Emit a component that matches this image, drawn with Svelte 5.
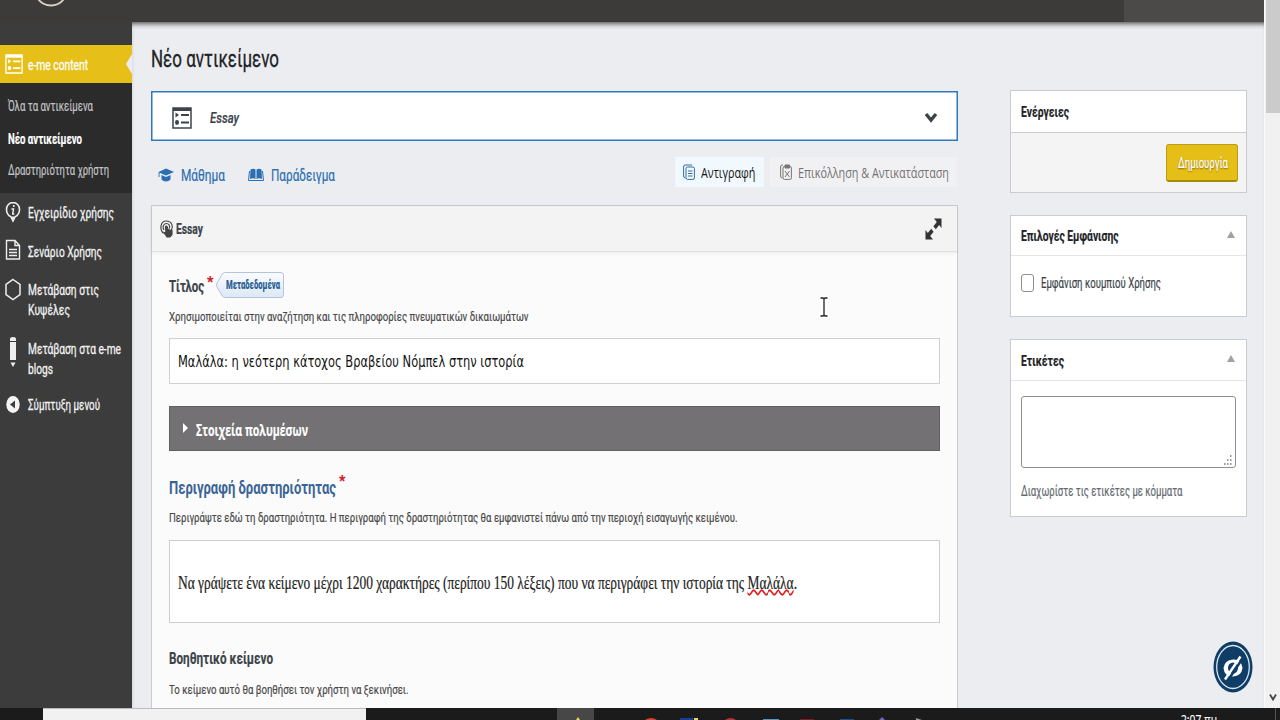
<script>
// sets a label in the condensed width it is given
function condense(node, width) {
    const natural = node.getBoundingClientRect().width;
    node.style.width = `${width}px`;
    node.style.transform = `scaleX(${width / natural})`;
}

const submenu = [
    { label: `Όλα τα αντικείμενα`, width: 85 },
    { label: `Νέο αντικείμενο`, width: 74, current: true },
    { label: `Δραστηριότητα χρήστη`, width: 101 },
];

const menu = [
    { icon: `info`, lines: [[`Εγχειρίδιο χρήσης`, 86]] },
    { icon: `document`, lines: [[`Σενάριο Χρήσης`, 74]] },
    { icon: `hexagon`, lines: [[`Μετάβαση στις`, 71], [`Κυψέλες`, 42]] },
    { icon: `pencil`, lines: [[`Μετάβαση στα e-me`, 93], [`blogs`, 25]] },
    { icon: `collapse`, lines: [[`Σύμπτυξη μενού`, 72]] },
];

let title = `Μαλάλα: η νεότερη κάτοχος Βραβείου Νόμπελ στην ιστορία`;
let showUsage = false;
let tags = ``;
</script>

{#snippet listIcon()}
  <svg class="list-icon" viewBox="0 0 20 22" width="20" height="22">
    <path d="M1 1h18v20H1z" fill="none" stroke="currentColor" stroke-width="1.5" />
    <path d="M1 1h18v3H1z" fill="currentColor" />
    <path d="M3.500 5.500l3.500 2.500-3.500 2.500z" fill="currentColor" />
    <path d="M9 8h8M9 15.500h8" stroke="currentColor" stroke-width="2" />
    <ellipse cx="5" cy="15.500" rx="2" ry="2.400" fill="currentColor" />
  </svg>
{/snippet}

<div class="screen">
  <header class="adminbar">
    <svg class="logo" viewBox="0 0 36 8" width="36" height="8">
      <path d="M3 -4C7 3 12 5.500 18 5.500S29 3 33 -4" fill="none" stroke="#d8d5bd" stroke-width="1.800" />
    </svg>
    <div class="account"></div>
  </header>

  <div class="body">
    <nav class="sidebar">
      <a class="top" href="#content">
        {@render listIcon()}
        <span class="t" use:condense={60}>e-me content</span>
      </a>
      <ul class="submenu">
        {#each submenu as item}
          <li class:current={item.current}><span class="t" use:condense={item.width}>{item.label}</span></li>
        {/each}
      </ul>
      <ul class="menu">
        {#each menu as item}
          <li class={item.icon}>
            <svg viewBox="0 0 16 26" width="16" height="26">
              {#if item.icon === `info`}
                <path d="M8 1.500C4.200 1.500 1.500 4.500 1.500 8.600c0 3.700 2.200 6.200 4.500 7.300L8 20l2-4.100c2.300-1.100 4.500-3.600 4.500-7.300C14.500 4.500 11.800 1.500 8 1.500z" fill="none" stroke="#eee" stroke-width="1.600" />
                <path d="M6.500 15.500h3L8 20.500z" fill="#eee" />
                <path d="M8.800 4v2M6.500 8h2l-.8 5h1.600" fill="none" stroke="#eee" stroke-width="1.500" />
              {:else if item.icon === `document`}
                <path d="M1.500 1.500h8.500l4.500 5v13.500h-13zM10 1.500v5h4.500" fill="none" stroke="#eee" stroke-width="1.400" />
                <path d="M4 10.500h8M4 13.500h8M4 16.500h8" stroke="#eee" stroke-width="1.300" />
              {:else if item.icon === `hexagon`}
                <path d="M8 1.500l7 5v10l-7 5-7-5v-10z" fill="none" stroke="#eee" stroke-width="1.500" />
              {:else if item.icon === `pencil`}
                <path d="M5 3q0-2 3-2t3 2v2H5zM5 6h6v18H5z" fill="#eee" />
                <path d="M5.500 26.500h5L8 31z" fill="#eee" />
              {:else}
                <ellipse cx="8" cy="9.500" rx="6.700" ry="8.500" fill="#f4f4f4" />
                <path d="M10 5.500v8l-5-4z" fill="#3c3c3c" />
              {/if}
            </svg>
            <div>
              {#each item.lines as [text, width]}
                <p><span class="t" use:condense={width}>{text}</span></p>
              {/each}
            </div>
          </li>
        {/each}
      </ul>
    </nav>

    <main>
      <section class="content">
        <h1><span class="t" use:condense={128}>Νέο αντικείμενο</span></h1>

        <div class="selector">
          {@render listIcon()}
          <em><span class="t" use:condense={29}>Essay</span></em>
          <svg class="chevron" viewBox="0 0 14 12" width="14" height="12">
            <path d="M2 2l5 6 5-6" fill="none" stroke="#3e4247" stroke-width="3.400" />
          </svg>
        </div>

        <div class="toolbar">
          <a href="#lesson">
            <svg viewBox="0 0 16 16" width="16" height="16" fill="#2a6fb0">
              <path d="M8 1.500L16 5 8 8.500 1.500 5.800V10H.6V5z" /><path d="M3.500 8v4.500c2.500 2.500 6.500 2.500 9 0V8L8 10z" />
            </svg>
            <span class="t" use:condense={44}>Μάθημα</span>
          </a>
          <a href="#example" class="example">
            <svg viewBox="0 0 16 16" width="16" height="16" fill="#2a6fb0">
              <path d="M2.500 2.500Q5.500 1 7.500 2.500v9.500Q5 10.500 2 12zM8.500 2.500q2.500-1.500 5 0l.5 9.500q-3-1.500-5.500 0z" />
              <path d="M1.500 4L.5 13.500h15L14.500 4" fill="none" stroke="#2a6fb0" />
            </svg>
            <span class="t" use:condense={64}>Παράδειγμα</span>
          </a>
          <button class="copy">
            <svg viewBox="0 0 12 16" width="12" height="16" fill="none" stroke="#2f6f9f">
              <path d="M9 1H2Q.6 1 .6 3v9q0 2 1.500 2" /><rect x="3" y="3" width="8.400" height="12.400" rx="1.500" /><path d="M5 7h4.500M5 9.500h4.500M5 12h4.500" />
            </svg>
            <span class="t" use:condense={54.5}>Αντιγραφή</span>
          </button>
          <button class="paste">
            <svg viewBox="0 0 12 16" width="12" height="16" fill="none" stroke="#777">
              <path d="M3 1H2Q.6 1 .6 3v9q0 2 1.500 2" /><rect x="3" y="2.500" width="8.400" height="12.900" rx="1.500" /><path d="M5 7l4.500 6M9.500 7L5 13" /><path d="M5 1h4.500v3H5z" fill="#777" />
            </svg>
            <span class="t" use:condense={151}>Επικόλληση &amp; Αντικατάσταση</span>
          </button>
        </div>

        <div class="editor">
          <div class="editor-head">
            <svg viewBox="0 0 13 18" width="13" height="18" fill="none" stroke="#444" stroke-width="1.200">
              <path d="M3.500 13.500C-.8 9 .5 1 6.300 1s7.200 6 5.200 9" /><path d="M4 10C2 7 3.500 3.500 6.300 3.500S10 6 9.500 8.500" />
              <path d="M5.500 6.500q1-1 1.500 0l1 3 4 1v4l-2 2.500H7l-3-4.500 2 .5z" fill="#444" />
            </svg>
            <strong><span class="t" use:condense={27}>Essay</span></strong>
            <svg class="expand" viewBox="0 0 17 22" width="17" height="22">
              <path d="M9 .5h7.500V10l-2.300-3-3.400 4.300-2.400-3L11.800 4zM8 21.500H.5V12l2.300 3 3.400-4.300 2.400 3L5.200 18z" fill="#333" />
            </svg>
          </div>

          <div class="fields">
            <div class="label-row">
              <label for="title"><span class="t" use:condense={35}>Τίτλος</span></label>
              <span class="star">*</span>
              <div class="metadata">
                <svg viewBox="0 0 68 26" width="68" height="26">
                  <defs>
                    <linearGradient id="tag" x2="0" y2="1"><stop stop-color="#fafcfe" /><stop offset="1" stop-color="#dce8f5" /></linearGradient>
                  </defs>
                  <path d="M8.500.5H65q2.500 0 2.500 3v19q0 3-2.500 3H8.500Q6 24.500 4.500 21L1 15q-1-2 0-4l3.500-6Q6 1 8.500.5z" fill="url(#tag)" stroke="#b4c4d8" />
                </svg>
                <b><span class="t" use:condense={54}>Μεταδεδομένα</span></b>
              </div>
            </div>
            <p class="hint"><span class="t" use:condense={359.5}>Χρησιμοποιείται στην αναζήτηση και τις πληροφορίες πνευματικών δικαιωμάτων</span></p>
            <div class="text-input" id="title"><span class="t" use:condense={346}>{title}</span></div>
            <div class="media">
              <svg viewBox="0 0 5 10" width="5" height="10"><path d="M0 0l5 5-5 5z" fill="#fff" /></svg>
              <span class="t" use:condense={112}>Στοιχεία πολυμέσων</span>
            </div>
            <div class="label-row description">
              <h2><span class="t" use:condense={167}>Περιγραφή δραστηριότητας</span></h2>
              <span class="star">*</span>
            </div>
            <p class="hint second"><span class="t" use:condense={568.5}>Περιγράψτε εδώ τη δραστηριότητα. Η περιγραφή της δραστηριότητας θα εμφανιστεί πάνω από την περιοχή εισαγωγής κειμένου.</span></p>
            <div class="rich-text">
              <span class="t" use:condense={619}>Να γράψετε ένα κείμενο μέχρι 1200 χαρακτήρες (περίπου 150 λέξεις) που να περιγράφει την ιστορία της <u>Μαλάλα</u>.</span>
            </div>
            <h3><span class="t" use:condense={104}>Βοηθητικό κείμενο</span></h3>
            <p class="hint third"><span class="t" use:condense={239.5}>Το κείμενο αυτό θα βοηθήσει τον χρήστη να ξεκινήσει.</span></p>
          </div>
        </div>
      </section>

      <aside>
        <div class="box actions">
          <h4><span class="t" use:condense={48}>Ενέργειες</span></h4>
          <div class="box-body"><button class="create"><span class="t" use:condense={50}>Δημιουργία</span></button></div>
        </div>
        <div class="box display">
          <h4><span class="t" use:condense={97.5}>Επιλογές Εμφάνισης</span><i></i></h4>
          <label class="box-body">
            <input type="checkbox" bind:checked={showUsage} />
            <span class="t" use:condense={120}>Εμφάνιση κουμπιού Χρήσης</span>
          </label>
        </div>
        <div class="box tags">
          <h4><span class="t" use:condense={43}>Ετικέτες</span><i></i></h4>
          <div class="box-body">
            <div class="tag-area">
              <textarea bind:value={tags}></textarea>
              <svg viewBox="0 0 8 10" width="8" height="10" fill="#999"><path d="M6 0h1.500v2H6zM6 4h1.500v2H6zM6 8h1.500v2H6zM3 4h1.500v2H3zM3 8h1.500v2H3zM0 8h1.500v2H0z" /></svg>
            </div>
            <p><span class="t" use:condense={161.5}>Διαχωρίστε τις ετικέτες με κόμματα</span></p>
          </div>
        </div>
      </aside>
    </main>
  </div>

  <footer class="taskbar">
    <div class="search"></div>
    <div class="apps">
      <div class="active"></div>
      <svg viewBox="0 0 400 12" width="400" height="12">
        <path d="M19 12l2-3 2 3z" fill="#e8d94a" />
        <path d="M88 12q6-4 12 0z" fill="#d8442c" />
        <path d="M123 10h13v2h-13z" fill="#173f94" /><path d="M137 10h4v2h-4z" fill="#e8d27a" />
        <path d="M168 12q6-4 11 0z" fill="#b83238" />
        <path d="M206 11h16v1h-16z" fill="#5196c8" />
        <path d="M243 11h14v1h-14z" fill="#82191d" />
        <path d="M283 11h14v1h-14z" fill="#17528c" />
        <path d="M322 12l3-3 3 3z" fill="#7165c4" />
        <path d="M359 10l6 2h-6z" fill="#999" />
      </svg>
    </div>
    <div class="clock"><span class="t" use:condense={36}>2:07 πμ</span></div>
    <div class="peek"></div>
  </footer>

  <div class="scrollbar">
    <div class="thumb"></div>
    <svg viewBox="0 0 8 9" width="8" height="9"><path d="M1 1.500l3 5 3-5" fill="none" stroke="#444" stroke-width="1.800" /></svg>
  </div>

  <svg class="access" viewBox="0 0 40 52" width="40" height="52">
    <ellipse cx="20" cy="26" rx="19.500" ry="25.500" fill="#0f3d66" />
    <ellipse cx="20" cy="26" rx="16.300" ry="21.500" fill="none" stroke="#d5e6f3" stroke-width="1.300" />
    <path d="M10.500 27q1-8 9.500-8.500T29.500 27q-1 8-9.500 8.500T10.500 27z" fill="#fff" />
    <ellipse cx="20" cy="27" rx="5" ry="5.500" fill="#0f3d66" />
    <path d="M29.500 17.500L14.500 40" stroke="#0f3d66" stroke-width="2.500" /><path d="M27.500 15.500L12 38.500" stroke="#fff" stroke-width="2.400" />
  </svg>

  <svg class="cursor" viewBox="0 0 8 20" width="8" height="20">
    <path d="M.5 1H3l1 1 1-1h2.500M4 2v16M.5 19H3l1-1 1 1h2.500" fill="none" stroke="#222" stroke-width="1.300" />
  </svg>
</div>

<style>
  :global(body) {
    margin: 0;
    overflow: hidden;
  }
  .screen {
    position: relative;
    display: flex;
    flex-direction: column;
    width: 1280px;
    height: 720px;
    overflow: hidden;
    background: #ecedf1;
    color: #3c434a;
    font: 15px/20px Roboto, "Noto Sans", sans-serif;
    -webkit-text-stroke: .2px;
  }
  .screen * {
    box-sizing: border-box;
  }
  .t {
    display: inline-block;
    flex: none;
    white-space: nowrap;
    transform-origin: left center;
  }
  h1, h2, h3, h4, p, ul {
    margin: 0;
    padding: 0;
    list-style: none;
  }
  svg {
    flex: none;
    display: block;
    overflow: visible;
  }
  a {
    text-decoration: none;
  }
  button {
    font: inherit;
    border: none;
    padding: 0;
  }

  .adminbar {
    display: flex;
    flex: none;
    justify-content: space-between;
    height: 22px;
    padding: 0 15px 0 33px;
    background: #3c3b3a;
    overflow: hidden;
  }
  .account {
    width: 141px;
    background: #4b4a48;
  }
  .body {
    display: flex;
    height: 686px;
    overflow: hidden;
  }

  .sidebar {
    width: 132px;
    flex: none;
    padding-top: 23px;
    background: #3c3c3c;
    color: #f2f2f2;
  }
  .top {
    position: relative;
    display: flex;
    align-items: center;
    gap: 5px;
    height: 38px;
    padding: 2px 0 0 5px;
    background: #e6c019;
    color: #fff;
    -webkit-text-stroke: .3px #fff;
  }
  .top .list-icon {
    width: 18px;
    height: 20px;
    margin-top: -3px;
  }
  .top::after {
    content: "";
    position: absolute;
    right: 0;
    top: 9px;
    border: 10px solid transparent;
    border-width: 10px 6px 10px 0;
    border-right-color: #ecedf1;
  }
  .submenu {
    height: 110px;
    padding: 8px;
    background: #2b2b2b;
    color: #c3c4c7;
    font-size: 14.500px;
  }
  .submenu li {
    height: 32px;
    line-height: 32px;
  }
  .submenu .current {
    padding-top: 1px;
    color: #fff;
    font-weight: bold;
  }
  .menu {
    -webkit-text-stroke: .3px #f2f2f2;
    padding-top: 10px;
  }
  .menu li {
    display: flex;
    gap: 7px;
    padding-left: 5px;
    margin-bottom: 18.500px;
  }
  .menu li svg {
    margin: -2px 0 -10px;
  }
  .menu .document svg {
    margin-top: -3px;
  }
  .menu .pencil svg {
    margin-top: -3px;
  }
  .menu .pencil {
    margin-bottom: 16px;
  }
  .menu .collapse svg {
    margin-top: 0;
  }

  main {
    display: flex;
    width: 1133px;
    padding-left: 19px;
    gap: 52px;
    box-shadow: inset 0 5px 5px -3px #555;
  }
  .content {
    width: 807px;
  }
  h1 {
    padding-top: 22px;
    height: 69px;
    font-size: 23.500px;
    font-weight: normal;
    line-height: 30px;
    color: #1d2327;
    -webkit-text-stroke: .3px #1d2327;
  }
  .selector {
    display: flex;
    align-items: center;
    height: 50px;
    padding: 3px 19px 0 20px;
    border: 1.500px solid #2e79b9;
    box-shadow: inset 0 0 0 .5px #2e79b9;
    background: #fff;
  }
  .selector em {
    flex: 1;
    margin-left: 18px;
    font-size: 15.500px;
    font-weight: 500;
  }
  .toolbar {
    display: flex;
    height: 64px;
    padding-top: 16px;
  }
  .toolbar a {
    display: flex;
    align-items: center;
    gap: 6.500px;
    height: 36px;
    padding-left: 7px;
    color: #2a6fb0;
    font-size: 17px;
  }
  .toolbar .example {
    padding-left: 23.500px;
  }
  .toolbar button {
    display: flex;
    align-items: center;
    height: 30px;
    gap: 6px;
    padding-left: 8px;
    font-family: "Open Sans", sans-serif;
    -webkit-text-stroke: 0;
  }
  .toolbar button .t {
    margin-top: -1px;
  }
  .toolbar .copy {
    width: 89px;
    margin-left: auto;
    background: #f2f9fe;
    color: #111;
  }
  .toolbar .paste {
    width: 187px;
    margin: 0 1px 0 6px;
    padding-left: 10px;
    background: #f1f1f3;
    color: #737373;
  }

  .editor {
    height: 520px;
    border: 1px solid #c9cbd0;
    background: #fbfbfb;
  }
  .editor-head {
    display: flex;
    align-items: center;
    gap: 3px;
    height: 46px;
    padding: 1px 15px 0 8px;
    border-bottom: 1px solid #e0e0e0;
    background: #f3f3f3;
    box-shadow: 0 1px 4px #0001;
  }
  .editor-head .expand {
    margin-left: auto;
  }
  .fields {
    padding: 20px 17px 0;
  }
  .label-row {
    display: flex;
    height: 30px;
    font-size: 16.500px;
    font-weight: bold;
    line-height: 29px;
  }
  .star {
    width: 8px;
    margin-left: 3px;
    font-size: 14px;
    line-height: 21px;
    color: #d1101d;
  }
  .metadata {
    display: flex;
    align-items: center;
    width: 68px;
    height: 26px;
    margin: 0 0 0 1px;
    -webkit-text-stroke: 0;
  }
  .metadata b {
    margin-left: -58px;
    font-size: 12px;
    line-height: 24px;
    color: #2b5e94;
  }
  .hint {
    height: 20px;
    margin-top: 4px;
    font-size: 13.500px;
    color: #494949;
  }
  .text-input {
    height: 46px;
    margin-top: 12px;
    padding-left: 8px;
    border: 1.500px solid #d0d0d1;
    background: #fff;
    color: #111;
    font: 16.500px/45px "DejaVu Sans", sans-serif;
    -webkit-text-stroke: 0;
  }
  .media {
    display: flex;
    align-items: center;
    gap: 8px;
    height: 45px;
    margin-top: 22px;
    padding: 1px 0 0 13px;
    border: 1px solid #616063;
    background: #737174;
    color: #fff;
    font: bold 16.500px "Open Sans", sans-serif;
  }
  .media svg {
    margin-top: -2px;
  }
  .description {
    margin-top: 22px;
  }
  .description .star {
    line-height: 16px;
  }
  h2 {
    font-size: 19px;
    color: #3a6496;
    -webkit-text-stroke: 0;
  }
  .second {
    margin-top: 4px;
  }
  .rich-text {
    height: 83px;
    margin-top: 13px;
    padding-left: 8px;
    border: 1.500px solid #cdcdcf;
    background: #fff;
    color: #222;
    font: 18px/84px "Liberation Serif", serif;
  }
  u {
    text-decoration: underline wavy #e02020 1.500px;
    text-underline-offset: 0;
  }
  h3 {
    height: 20px;
    margin-top: 26px;
    font-size: 16.500px;
    line-height: 20px;
  }
  .third {
    margin-top: 10px;
  }

  aside {
    width: 237px;
    padding-top: 68px;
  }
  .box {
    border: 1px solid #c9cbd0;
    background: #fff;
    margin-bottom: 22px;
  }
  .box h4 {
    display: flex;
    align-items: center;
    justify-content: space-between;
    height: 40px;
    padding: 0 10px;
    border-bottom: 1px solid #e4e5e8;
    font-size: 15px;
    color: #1d2327;
  }
  .box h4 i {
    margin: -2px 1px 0 0;
    border: 4px solid transparent;
    border-top: 0;
    border-bottom: 7px solid #a0a1a5;
  }
  .actions {
    height: 103px;
    background: #f4f4f4;
  }
  .box.actions h4 {
    height: 42px;
    background: #fff;
    border-color: #ccc;
  }
  .actions .box-body {
    display: flex;
    justify-content: flex-end;
    padding: 11px 8px;
  }
  .create {
    display: flex;
    align-items: center;
    width: 72px;
    height: 38px;
    padding-left: 11px;
    border: 1px solid #bd9c12;
    border-bottom: 2px solid #a98b0d;
    border-radius: 3px;
    background: #e5be18;
    color: #fff;
    text-shadow: 0 1px 2px #806800;
  }
  .display {
    height: 102px;
  }
  .display .box-body {
    display: flex;
    align-items: center;
    height: 54px;
    padding-left: 10px;
  }
  input {
    appearance: none;
    width: 13px;
    height: 18px;
    margin: 0 6.500px 0 0;
    border: 1px solid #8c8f94;
    border-radius: 3px;
  }
  .tags {
    height: 178px;
  }
  .box.tags h4 {
    height: 41px;
    padding-top: 1px;
  }
  .box.tags i {
    margin-top: -4px;
  }
  .tags .box-body {
    padding: 15px 10px;
    color: #646970;
  }
  .tag-area {
    position: relative;
    height: 72px;
    margin-bottom: 13px;
  }
  textarea {
    display: block;
    width: 215px;
    height: 72px;
    border: 1px solid #8c8f94;
    border-radius: 3px;
    background: #fff;
    resize: none;
  }
  .tag-area svg {
    position: absolute;
    right: 4px;
    bottom: 3px;
  }

  .taskbar {
    display: flex;
    height: 12px;
    padding-left: 43px;
    background: #1b1b1b;
    overflow: hidden;
  }
  .search {
    width: 323px;
    background: #f1f1f1;
    border-top: 1px solid #bbb;
  }
  .apps {
    display: flex;
    flex: 1;
    margin-left: 191px;
  }
  .active {
    width: 37px;
    margin-right: -37px;
    background: #474747;
  }
  .apps svg {
    z-index: 1;
  }
  .clock {
    width: 94px;
    padding-top: 1px;
    color: #fff;
    font-family: "Open Sans", sans-serif;
  }
  .peek {
    width: 5px;
    border-left: 1px solid #555;
  }

  .scrollbar {
    position: absolute;
    top: 0;
    right: 0;
    display: flex;
    flex-direction: column;
    justify-content: space-between;
    align-items: center;
    width: 16px;
    height: 708px;
    padding-bottom: 6px;
    border-left: 1px solid #fafafa;
    background: #f1f1f1;
  }
  .thumb {
    width: 14px;
    height: 113px;
    background: #cbcbcb;
  }
  .access {
    position: absolute;
    left: 1213px;
    top: 641px;
  }
  .cursor {
    position: absolute;
    left: 819.500px;
    top: 297px;
  }
</style>
